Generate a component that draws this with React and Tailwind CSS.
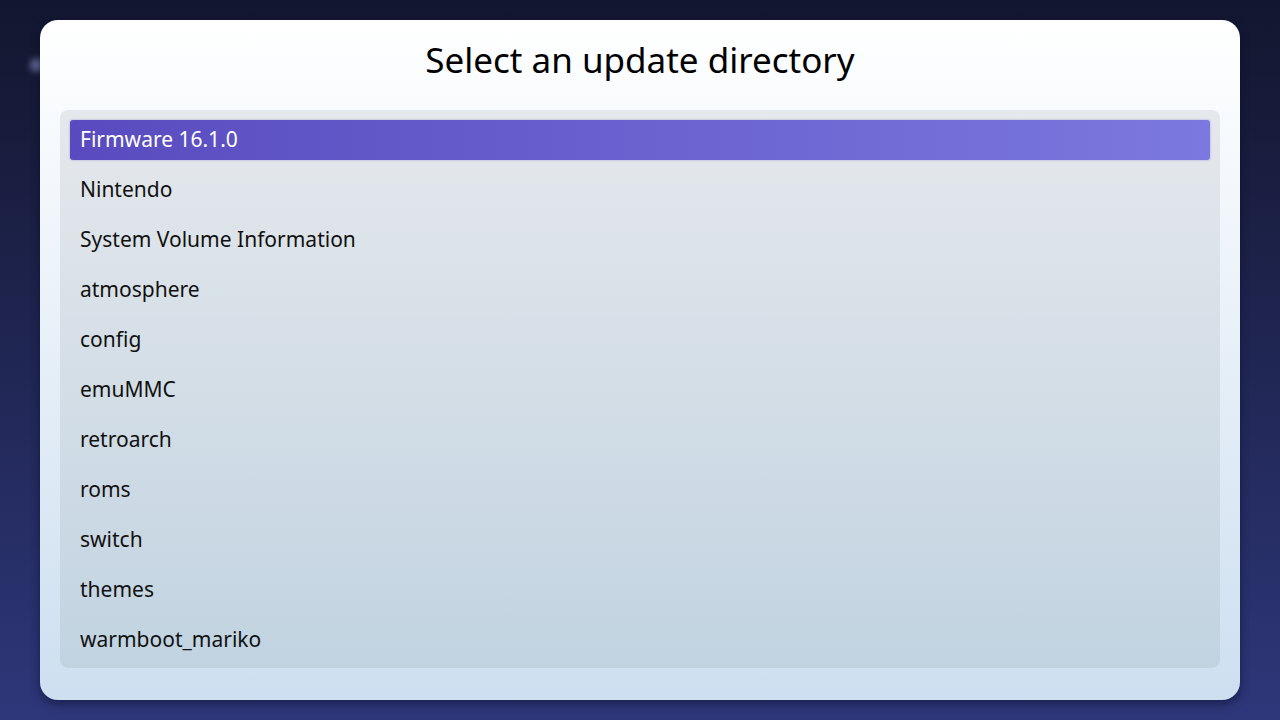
import React from 'react';

const dirs = [
  'Firmware 16.1.0',
  'Nintendo',
  'System Volume Information',
  'atmosphere',
  'config',
  'emuMMC',
  'retroarch',
  'roms',
  'switch',
  'themes',
  'warmboot_mariko',
];

const App = () => {
  const selected = 0;

  return (
    <div
      className="relative w-[1280px] h-[720px] overflow-hidden bg-gradient-to-b from-[#13162f] to-[#2e377a] px-[40px] pt-[20px] pb-[20px]"
      style={{ fontFamily: '"Noto Sans", "Open Sans", sans-serif' }}
    >
      {/* Sternchen hinter der Karte */}
      <div className="absolute left-[30px] top-[58px] w-[14px] h-[14px] rounded-full bg-[#8d93c9] opacity-60 blur-[3px]" />

      <div className="relative h-full rounded-[18px] bg-gradient-to-b from-[#ffffff] to-[#cddff0] shadow-[0_4px_10px_rgba(5,8,30,0.45)] flex flex-col px-[20px] pb-[32px]">
        <h1 className="h-[80px] mb-[10px] flex items-center justify-center text-[35px] text-black">
          Select an update directory
        </h1>

        <div className="flex-1 rounded-[8px] bg-gradient-to-b from-[#e5e8ec] to-[#c1d3e1] pt-[10px] pb-[8px] px-[10px] flex flex-col gap-[10px]">
          {dirs.map((name, i) => (
            <div
              key={name}
              className={
                i === selected
                  ? 'h-[40px] flex items-center px-[10px] rounded-[3px] bg-gradient-to-r from-[#594bbf] to-[#7b78df] text-white text-[21px] shadow-[0_0_2px_rgba(80,70,180,0.5)]'
                  : 'h-[40px] flex items-center px-[10px] text-[#111] text-[21px]'
              }
            >
              {name}
            </div>
          ))}
        </div>
      </div>
    </div>
  );
};

export default App;
